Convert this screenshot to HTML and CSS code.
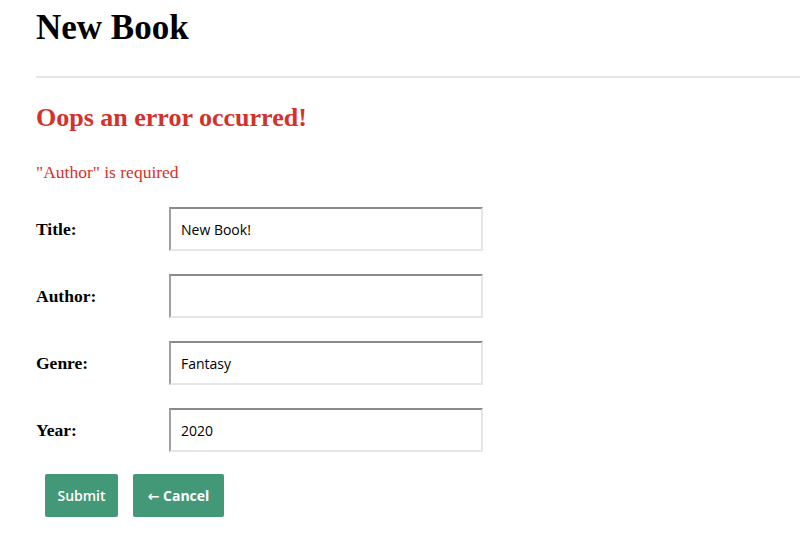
FILE: index.html
```html
<!DOCTYPE html>
<html lang="en">
<head>
<meta charset="utf-8">
<title>New Book</title>
<link rel="stylesheet" href="styles.css">
</head>
<body>
<div class="page">
  <h1 class="title">New Book</h1>
  <hr class="rule">
  <h2 class="error-title">Oops an error occurred!</h2>
  <p class="error-msg">"Author" is required</p>
  <form class="form">
    <div class="row">
      <label class="label">Title:</label>
      <input class="field" type="text" value="New Book!">
    </div>
    <div class="row">
      <label class="label">Author:</label>
      <input class="field" type="text" value="">
    </div>
    <div class="row">
      <label class="label">Genre:</label>
      <input class="field" type="text" value="Fantasy">
    </div>
    <div class="row">
      <label class="label">Year:</label>
      <input class="field" type="text" value="2020">
    </div>
    <div class="actions">
      <button class="btn btn-submit" type="button">Submit</button>
      <button class="btn btn-cancel" type="button">&larr; Cancel</button>
    </div>
  </form>
</div>
</body>
</html>
```
FILE: styles.css
```css
html, body {
  margin: 0;
  padding: 0;
  background: #ffffff;
}
body {
  font-family: "Liberation Serif", "Times New Roman", serif;
  color: #000;
}
.page {
  padding-left: 36px;
}
.title {
  margin: 0;
  padding-top: 8px;
  font-size: 35px;
  line-height: 40px;
  font-weight: bold;
}
.rule {
  margin: 28px 0 0 0;
  border: 0;
  height: 2px;
  background: #e6e6e6;
}
.error-title {
  margin: 25px 0 0 0;
  font-size: 26px;
  line-height: 30px;
  font-weight: bold;
  color: #d3322a;
}
.error-msg {
  margin: 29px 0 0 0;
  font-size: 17.5px;
  line-height: 20px;
  color: #d3322a;
}
.form {
  margin-top: 25px;
  display: flex;
  flex-direction: column;
  gap: 23px;
}
.row {
  display: flex;
  align-items: center;
}
.label {
  width: 133px;
  font-size: 17.5px;
  font-weight: bold;
}
.field {
  box-sizing: border-box;
  width: 314px;
  height: 44px;
  margin: 0;
  padding: 0 10px;
  border-top: 2px solid #8a8a8a;
  border-left: 2px solid #a0a0a0;
  border-right: 2px solid #e6e6e6;
  border-bottom: 2px solid #e6e6e6;
  background: #fff;
  font-family: "Open Sans", "DejaVu Sans", sans-serif;
  font-size: 14px;
  color: #000;
  outline: none;
}
.actions {
  display: flex;
  gap: 15px;
  margin-top: -1px;
  padding-left: 9px;
}
.btn {
  box-sizing: border-box;
  height: 43px;
  border: 0;
  border-radius: 2px;
  background: #439877;
  color: #ffffff;
  font-family: "Open Sans", "DejaVu Sans", sans-serif;
  font-size: 14px;
  cursor: pointer;
}
.btn-submit {
  width: 73px;
  font-weight: 600;
}
.btn-cancel {
  width: 91px;
  font-weight: 700;
}
```
